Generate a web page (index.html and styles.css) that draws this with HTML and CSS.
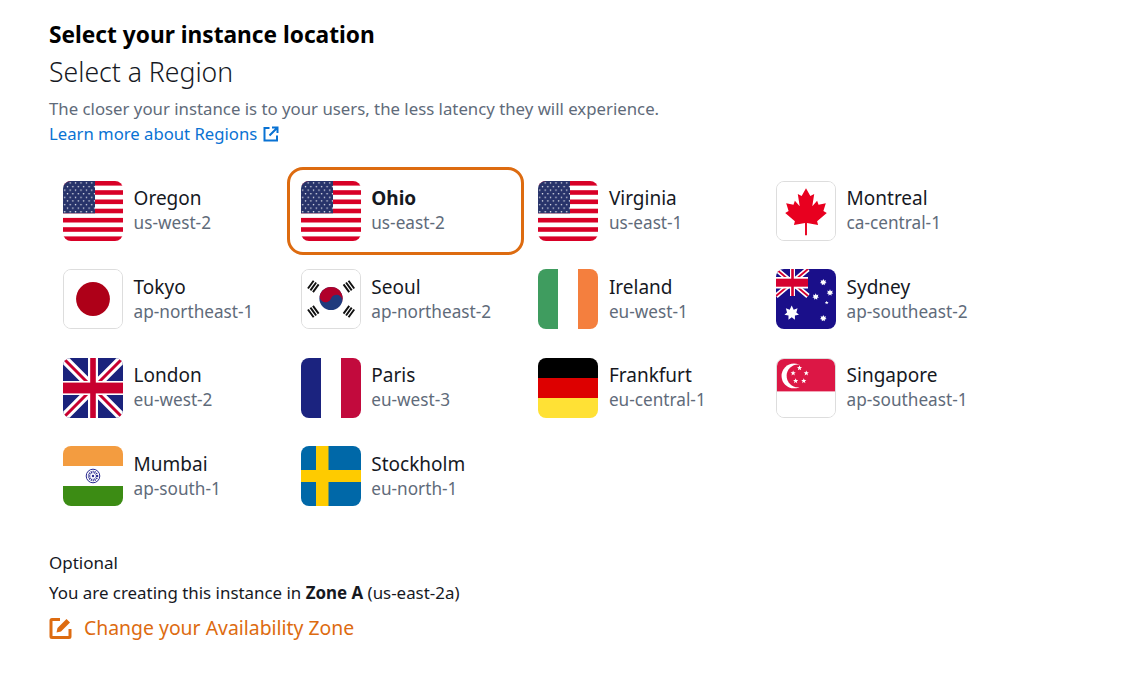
FILE: index.html
```html
<!DOCTYPE html>
<html lang="en">
<head>
	<meta charset="UTF-8">
	<title>Select your instance location</title>
	<link rel="stylesheet" href="styles.css">
</head>
<body>
<svg class="defs" width="0" height="0" aria-hidden="true">
	<defs>
		<pattern id="usStars" width="5.4" height="7.2" patternUnits="userSpaceOnUse" x="0.4" y="0.4">
			<circle cx="1.4" cy="1.6" r="0.75" fill="#fff"/>
			<circle cx="4.1" cy="5.2" r="0.75" fill="#fff"/>
		</pattern>
		<polygon id="star7" points="0,-1 .27,-.43 .78,-.62 .62,-.07 .97,.22 .43,.34 .43,.9 0,.55 -.43,.9 -.43,.34 -.97,.22 -.62,-.07 -.78,-.62 -.27,-.43"/>
		<polygon id="star5" points="0,-1 .27,-.33 .95,-.31 .42,.13 .59,.81 0,.43 -.59,.81 -.42,.13 -.95,-.31 -.27,-.33"/>
		<g id="trigram" stroke="#111" stroke-width="2">
			<path d="M-5 -3.200H5M-5 0H5M-5 3.200H5"/>
		</g>
		<symbol id="flagUs" viewBox="0 0 60 60">
			<rect width="60" height="60" fill="#fff"/>
			<rect y="0" width="60" height="4.600" fill="#d80027"/>
			<rect y="9.200" width="60" height="4.600" fill="#d80027"/>
			<rect y="18.500" width="60" height="4.600" fill="#d80027"/>
			<rect y="27.700" width="60" height="4.600" fill="#d80027"/>
			<rect y="36.900" width="60" height="4.600" fill="#d80027"/>
			<rect y="46.200" width="60" height="4.600" fill="#d80027"/>
			<rect y="55.400" width="60" height="4.600" fill="#d80027"/>
			<rect width="32" height="32.300" fill="#27336a"/>
			<rect width="32" height="32.300" fill="url(#usStars)"/>
		</symbol>
	</defs>
</svg>

<h1 class="title">Select your instance location</h1>
<h2 class="subtitle">Select a Region</h2>
<p class="hint">The closer your instance is to your users, the less latency they will experience.</p>
<a class="learn" href="#">Learn more about Regions
	<svg class="icon-ext" viewBox="0 0 16 16" width="16" height="16">
		<path d="M6.500 2H1.500V14.500H14V9.500" fill="none" stroke="#0972d3" stroke-width="2"/>
		<path d="M6.500 9.500L14 2M9 1.500H14.500V7" fill="none" stroke="#0972d3" stroke-width="2"/>
	</svg>
</a>

<div class="regions">
	<div class="region">
		<svg class="flag" viewBox="0 0 60 60"><use href="#flagUs"/></svg>
		<div class="region-text"><span class="city">Oregon</span><span class="code">us-west-2</span></div>
	</div>
	<div class="region selected">
		<svg class="flag" viewBox="0 0 60 60"><use href="#flagUs"/></svg>
		<div class="region-text"><span class="city">Ohio</span><span class="code">us-east-2</span></div>
	</div>
	<div class="region">
		<svg class="flag" viewBox="0 0 60 60"><use href="#flagUs"/></svg>
		<div class="region-text"><span class="city">Virginia</span><span class="code">us-east-1</span></div>
	</div>
	<div class="region">
		<svg class="flag bordered" viewBox="0 0 60 60">
			<rect width="60" height="60" fill="#fff"/>
			<polygon fill="#e8001f" points="30,6.500 34.500,14.500 38.500,12.500 36.500,25 41.500,19.500 43,23.500 50.500,22 48,30 51.500,32 41.500,40.500 42.500,44.500 31,42.500 31,55 29,55 29,42.500 17.500,44.500 18.500,40.500 8.500,32 12,30 9.500,22 17,23.500 18.500,19.500 23.500,25 21.500,12.500 25.500,14.500"/>
		</svg>
		<div class="region-text"><span class="city">Montreal</span><span class="code">ca-central-1</span></div>
	</div>

	<div class="region">
		<svg class="flag bordered" viewBox="0 0 60 60">
			<rect width="60" height="60" fill="#fff"/>
			<circle cx="30" cy="30" r="17.500" fill="#ae0018"/>
		</svg>
		<div class="region-text"><span class="city">Tokyo</span><span class="code">ap-northeast-1</span></div>
	</div>
	<div class="region">
		<svg class="flag bordered" viewBox="0 0 60 60">
			<rect width="60" height="60" fill="#fff"/>
			<circle cx="30" cy="29.500" r="12" fill="#1f3a7d"/>
			<path d="M18 29.500A12 12 0 0 1 42 29.500A6 6 0 0 0 30 29.500A6 6 0 0 1 18 29.500Z" fill="#b0002a" transform="rotate(20 30 29.500)"/>
			<use href="#trigram" transform="translate(11.700 17) rotate(-54)"/>
			<use href="#trigram" transform="translate(48.500 17) rotate(54)"/>
			<use href="#trigram" transform="translate(11.700 43) rotate(54)"/>
			<use href="#trigram" transform="translate(48.500 43) rotate(-54)"/>
		</svg>
		<div class="region-text"><span class="city">Seoul</span><span class="code">ap-northeast-2</span></div>
	</div>
	<div class="region">
		<svg class="flag" viewBox="0 0 60 60">
			<rect width="20" height="60" fill="#3f9c5f"/>
			<rect x="20" width="20" height="60" fill="#fff"/>
			<rect x="40" width="20" height="60" fill="#f47f3e"/>
		</svg>
		<div class="region-text"><span class="city">Ireland</span><span class="code">eu-west-1</span></div>
	</div>
	<div class="region">
		<svg class="flag" viewBox="0 0 60 60">
			<rect width="60" height="60" fill="#1a0f8a"/>
			<path d="M0 0L32 27M32 0L0 27" stroke="#fff" stroke-width="5"/>
			<path d="M0 0L32 27M32 0L0 27" stroke="#d6002f" stroke-width="1.800"/>
			<rect x="14" width="5" height="27" fill="#fff"/>
			<rect y="8" width="32" height="11.500" fill="#fff"/>
			<rect x="15.200" width="2.600" height="27" fill="#d6002f"/>
			<rect y="9.700" width="32" height="8" fill="#d6002f"/>
			<use href="#star7" transform="translate(15.700 44) scale(7.500)" fill="#fff"/>
			<use href="#star7" transform="translate(47.300 13.300) scale(3.400)" fill="#fff"/>
			<use href="#star7" transform="translate(54 23.700) scale(3.400)" fill="#fff"/>
			<use href="#star7" transform="translate(39.700 27.700) scale(3.400)" fill="#fff"/>
			<use href="#star5" transform="translate(50.700 33.700) scale(2)" fill="#fff"/>
			<use href="#star7" transform="translate(47.300 49.300) scale(3.400)" fill="#fff"/>
		</svg>
		<div class="region-text"><span class="city">Sydney</span><span class="code">ap-southeast-2</span></div>
	</div>

	<div class="region">
		<svg class="flag" viewBox="0 0 60 60">
			<rect width="60" height="60" fill="#1a237c"/>
			<path d="M0 0L60 60M60 0L0 60" stroke="#fff" stroke-width="9"/>
			<path d="M0 0L60 60M60 0L0 60" stroke="#c8002f" stroke-width="3"/>
			<rect x="25" width="10" height="60" fill="#fff"/>
			<rect y="23" width="60" height="14" fill="#fff"/>
			<rect x="27.200" width="5.600" height="60" fill="#c8002f"/>
			<rect y="24.600" width="60" height="10.800" fill="#c8002f"/>
		</svg>
		<div class="region-text"><span class="city">London</span><span class="code">eu-west-2</span></div>
	</div>
	<div class="region">
		<svg class="flag" viewBox="0 0 60 60">
			<rect width="20" height="60" fill="#1b237f"/>
			<rect x="20" width="20" height="60" fill="#fff"/>
			<rect x="40" width="20" height="60" fill="#c20a3d"/>
		</svg>
		<div class="region-text"><span class="city">Paris</span><span class="code">eu-west-3</span></div>
	</div>
	<div class="region">
		<svg class="flag" viewBox="0 0 60 60">
			<rect width="60" height="20" fill="#000"/>
			<rect y="20" width="60" height="20" fill="#dd0000"/>
			<rect y="40" width="60" height="20" fill="#ffe135"/>
		</svg>
		<div class="region-text"><span class="city">Frankfurt</span><span class="code">eu-central-1</span></div>
	</div>
	<div class="region">
		<svg class="flag bordered" viewBox="0 0 60 60">
			<rect width="60" height="60" fill="#fff"/>
			<rect width="60" height="33.500" fill="#dc1745"/>
			<circle cx="17.500" cy="17.500" r="12.800" fill="#fff"/>
			<circle cx="21.800" cy="17.500" r="11.800" fill="#dc1745"/>
			<use href="#star5" transform="translate(23.300 9.300) scale(2.800)" fill="#fff"/>
			<use href="#star5" transform="translate(30.300 14.700) scale(2.800)" fill="#fff"/>
			<use href="#star5" transform="translate(27.700 22.700) scale(2.800)" fill="#fff"/>
			<use href="#star5" transform="translate(19.300 22.700) scale(2.800)" fill="#fff"/>
			<use href="#star5" transform="translate(16.700 14.700) scale(2.800)" fill="#fff"/>
		</svg>
		<div class="region-text"><span class="city">Singapore</span><span class="code">ap-southeast-1</span></div>
	</div>

	<div class="region">
		<svg class="flag" viewBox="0 0 60 60">
			<rect width="60" height="20" fill="#f39c40"/>
			<rect y="20" width="60" height="20" fill="#fff"/>
			<rect y="40" width="60" height="20" fill="#3c8c14"/>
			<circle cx="30" cy="30" r="6.800" fill="none" stroke="#2a2a90" stroke-width="1"/>
			<circle cx="30" cy="30" r="4" fill="none" stroke="#2a2a90" stroke-width="2.500" stroke-dasharray="1 .8"/>
			<circle cx="30" cy="30" r="1.200" fill="#2a2a90"/>
		</svg>
		<div class="region-text"><span class="city">Mumbai</span><span class="code">ap-south-1</span></div>
	</div>
	<div class="region">
		<svg class="flag" viewBox="0 0 60 60">
			<rect width="60" height="60" fill="#0068a8"/>
			<rect x="15" width="12.500" height="60" fill="#fecb00"/>
			<rect y="24" width="60" height="12" fill="#fecb00"/>
		</svg>
		<div class="region-text"><span class="city">Stockholm</span><span class="code">eu-north-1</span></div>
	</div>
</div>

<div class="zone">
	<p class="optional">Optional</p>
	<p class="zone-line">You are creating this instance in <b>Zone A</b> (us-east-2a)</p>
	<a class="change" href="#">
		<svg class="icon-edit" viewBox="0 0 24 24" width="24" height="24">
			<path d="M11 3.500H3Q2 3.500 2 4.500V20.500Q2 21.500 3 21.500H20Q21 21.500 21 20.500V13" fill="none" stroke="#dd6b10" stroke-width="3"/>
			<path d="M7.500 16.500L8.500 12L17.500 3L21 6.500L12 15.500Z" fill="#dd6b10"/>
		</svg>
		Change your Availability Zone
	</a>
</div>
</body>
</html>
```

FILE: styles.css
```css
*{padding: 0; margin: 0; box-sizing: border-box;}
body{background: #fff; color: #16191f; font-family: "Noto Sans", "Liberation Sans", sans-serif; padding: 19px 0 0 49px; font-size: 17px;}
.defs{position: absolute;}
.title{font-size: 22.7px; line-height: 32px; font-weight: 700; color: #000;}
.subtitle{font-size: 26.6px; line-height: 36px; font-weight: 300; margin-top: 3px; color: #16191f;}
.hint{font-size: 16.8px; line-height: 24px; color: #5f6b7a; margin-top: 7px;}
.learn{display: inline-flex; align-items: center; gap: 6px; font-size: 16.7px; line-height: 24px; color: #0972d3; text-decoration: none; margin-top: 1px;}
.icon-ext{display: block;}

.regions{display: grid; grid-template-columns: repeat(4, 237.67px); grid-auto-rows: 88.4px; margin-top: 20.7px;}
.region{display: flex; align-items: center; gap: 10.6px; padding: 0 11px; border: 3px solid transparent; border-radius: 16px;}
.region.selected{border-color: #dd6b10;}
.flag{width: 60px; height: 60px; border-radius: 8px; flex: none; display: block;}
.flag.bordered{border: 1px solid #ddd;}
.region-text{display: flex; flex-direction: column;}
.city{font-size: 19px; line-height: 25px;}
.selected .city{font-weight: 700;}
.code{font-size: 17.2px; line-height: 24px; color: #5f6b7a;}

.zone{margin-top: 30.3px;}
.optional{font-size: 17px; line-height: 24px;}
.zone-line{font-size: 16.9px; line-height: 24px; margin-top: 6px;}
.change{display: flex; align-items: center; gap: 11px; font-size: 19.4px; line-height: 28px; color: #dd6b10; text-decoration: none; margin-top: 9px;}
.icon-edit{display: block;}
```
